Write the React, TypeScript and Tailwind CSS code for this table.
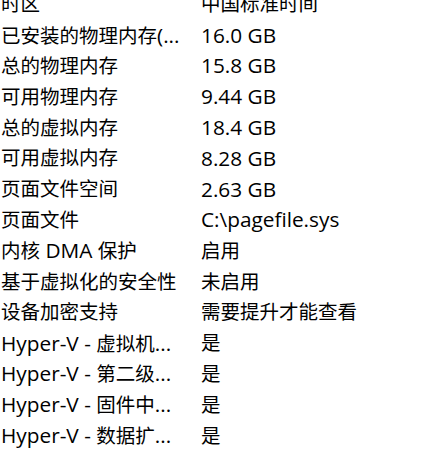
import React from "react";

const rows: [string, string][] = [
  ["时区", "中国标准时间"],
  ["已安装的物理内存(...", "16.0 GB"],
  ["总的物理内存", "15.8 GB"],
  ["可用物理内存", "9.44 GB"],
  ["总的虚拟内存", "18.4 GB"],
  ["可用虚拟内存", "8.28 GB"],
  ["页面文件空间", "2.63 GB"],
  ["页面文件", "C:\\pagefile.sys"],
  ["内核 DMA 保护", "启用"],
  ["基于虚拟化的安全性", "未启用"],
  ["设备加密支持", "需要提升才能查看"],
  ["Hyper-V - 虚拟机...", "是"],
  ["Hyper-V - 第二级...", "是"],
  ["Hyper-V - 固件中...", "是"],
  ["Hyper-V - 数据扩...", "是"],
];

function Mixed({ text }: { text: string }) {
  const parts = text.match(/[\x00-\x7f]+|[^\x00-\x7f]+/g) || [];
  return (
    <>
      {parts.map((p, i) =>
        /^[\x00-\x7f]+$/.test(p) ? (
          <span key={i} className="text-[20.8px]">
            {p}
          </span>
        ) : (
          <span key={i}>{p}</span>
        )
      )}
    </>
  );
}

export default function App() {
  return (
    <div
      className="w-[439px] h-[468px] overflow-hidden bg-white text-black"
      style={{ fontFamily: '"Open Sans", "Noto Sans CJK SC", sans-serif' }}
    >
      <div className="mt-[-11px] flex flex-col">
        {rows.map(([k, v], i) => (
          <div key={i} className="flex h-[30.8px] items-center text-[19.5px] leading-[26px]">
            <div className="w-[201px] pl-[1px] whitespace-nowrap">
              <Mixed text={k} />
            </div>
            <div className="whitespace-nowrap">
              <Mixed text={v} />
            </div>
          </div>
        ))}
      </div>
    </div>
  );
}
